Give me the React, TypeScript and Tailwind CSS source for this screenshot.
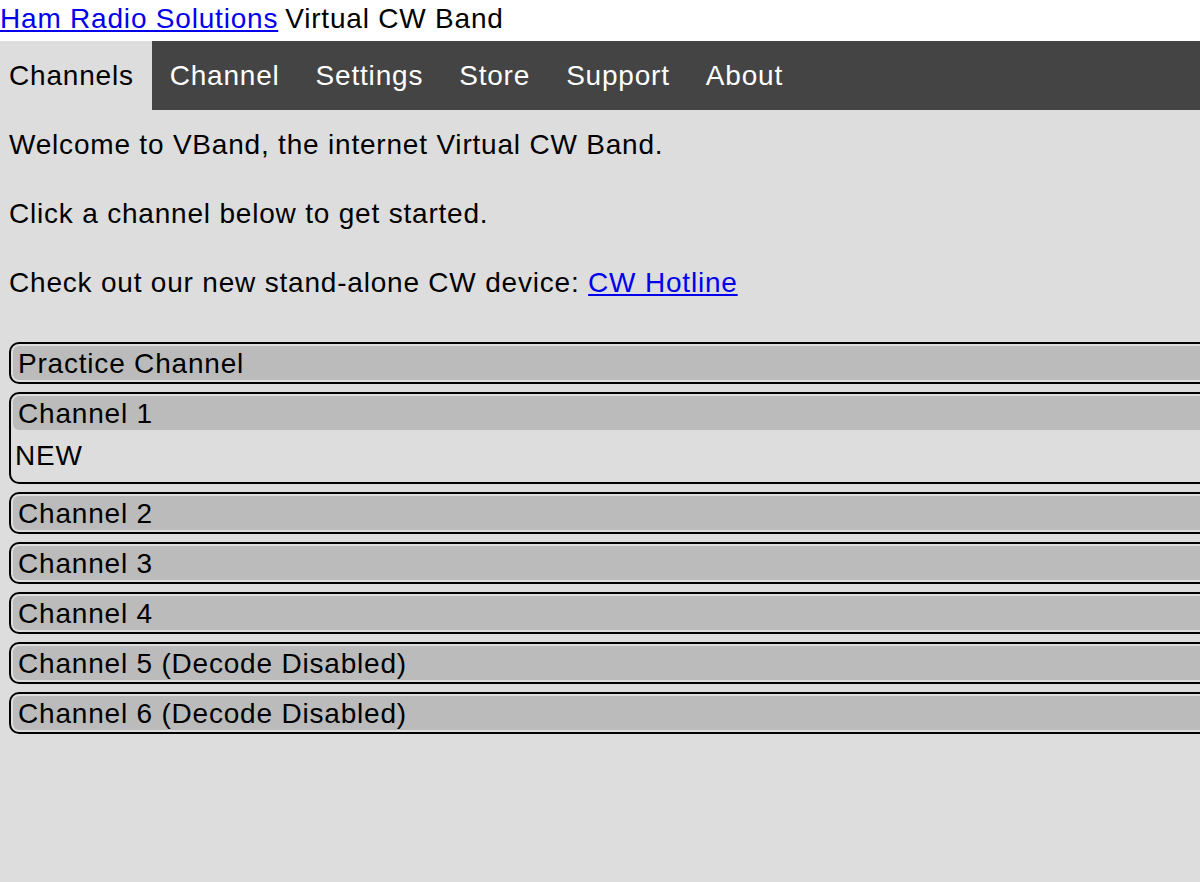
const TABS = ["Channels", "Channel", "Settings", "Store", "Support", "About"];

const CHANNELS = [
  { name: "Practice Channel" },
  { name: "Channel 1", note: "NEW" },
  { name: "Channel 2" },
  { name: "Channel 3" },
  { name: "Channel 4" },
  { name: "Channel 5 (Decode Disabled)" },
  { name: "Channel 6 (Decode Disabled)" },
];

export default function App() {
  return (
    <div className="h-[882px] w-[1200px] overflow-hidden bg-[#dddddd] font-['Liberation_Sans',Arial,sans-serif] text-[28px] leading-[31px] tracking-[0.8px] text-black">
      <div className="flex h-[41px] items-center bg-white pb-[4px]">
        <a href="#" className="text-[#0000ee] underline">Ham Radio Solutions</a>
        <span className="ml-[7px]">Virtual CW Band</span>
      </div>

      <nav className="flex h-[69px] bg-[#444444]">
        {TABS.map((t, i) =>
          i === 0 ? (
            <div key={t} className="flex items-center bg-[#dddddd] pl-[9px] pr-[18px] text-black">
              {t}
            </div>
          ) : (
            <div key={t} className="flex items-center px-[18px] text-white">
              {t}
            </div>
          )
        )}
      </nav>

      <div className="px-[9px] pt-[19px]">
        <p>Welcome to VBand, the internet Virtual CW Band.</p>
        <p className="mt-[38px]">Click a channel below to get started.</p>
        <p className="mt-[38px]">
          Check out our new stand-alone CW device:{" "}
          <a href="#" className="text-[#0000ee] underline">CW Hotline</a>
        </p>

        <div className="mt-[44px] flex w-[1260px] flex-col gap-[8px]">
          {CHANNELS.map((c) => (
            <div key={c.name} className="rounded-[10px] border-2 border-black p-[2px]">
              <div className="flex h-[34px] items-center rounded-[6px] bg-[#bbbbbb] pl-[5px]">{c.name}</div>
              {c.note && <div className="flex h-[50px] items-center pl-[2px]">{c.note}</div>}
            </div>
          ))}
        </div>
      </div>
    </div>
  );
}
